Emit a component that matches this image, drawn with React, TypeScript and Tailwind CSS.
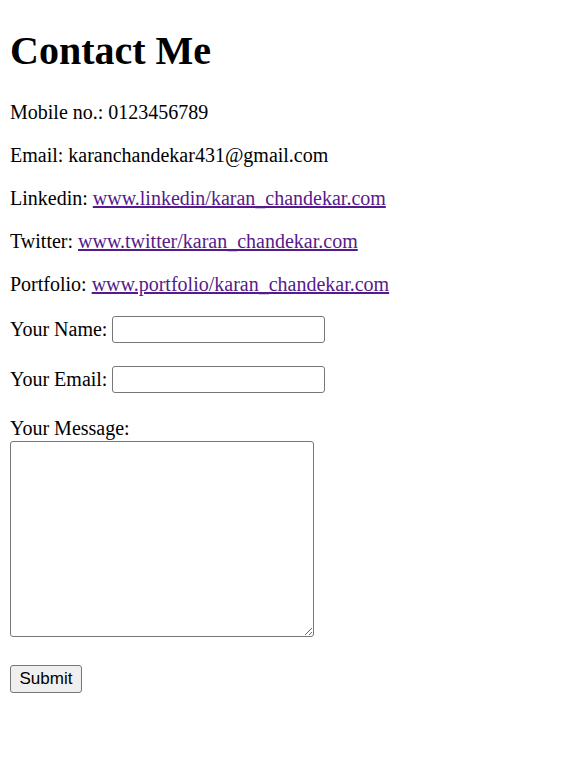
export default function App() {
  const links = [
    { label: "Linkedin:", href: "www.linkedin/karan_chandekar.com" },
    { label: "Twitter:", href: "www.twitter/karan_chandekar.com" },
    { label: "Portfolio:", href: "www.portfolio/karan_chandekar.com" },
  ]

  return (
    <div className="min-h-[781px] bg-white px-[10px] pt-px text-[20px] leading-[normal] text-black font-['Liberation_Serif',serif]">
      <h1 className="mt-[26px] mb-[27px] text-[40px] font-bold leading-[normal]">Contact Me</h1>

      <p className="my-5">Mobile no.: 0123456789</p>
      <p className="my-5">Email: karanchandekar431@gmail.com</p>
      {links.map((link) => (
        <p key={link.label} className="my-5">
          {link.label}{" "}
          <a href="#" className="text-[#551a8b] underline">
            {link.href}
          </a>
        </p>
      ))}

      <form className="mt-5">
        <label>Your Name: </label>
        <input
          type="text"
          className="h-[27px] w-[213px] rounded-[3px] border border-[#767676] bg-white align-baseline"
        />
        <br />
        <br />
        <label>Your Email: </label>
        <input
          type="email"
          className="h-[27px] w-[213px] rounded-[3px] border border-[#767676] bg-white align-baseline"
        />
        <br />
        <br />
        <label className="inline-block pt-px">Your Message:</label>
        <br />
        <textarea className="mt-px h-[196px] w-[304px] resize rounded-[3px] border border-[#767676] bg-white align-baseline" />
        <br />
        <br />
        <button
          type="button"
          className="h-[28px] w-[72px] rounded-[3px] border border-[#767676] bg-[#efefef] text-[17px] font-['Liberation_Sans',Arial,sans-serif] text-black"
        >
          Submit
        </button>
      </form>
    </div>
  )
}
